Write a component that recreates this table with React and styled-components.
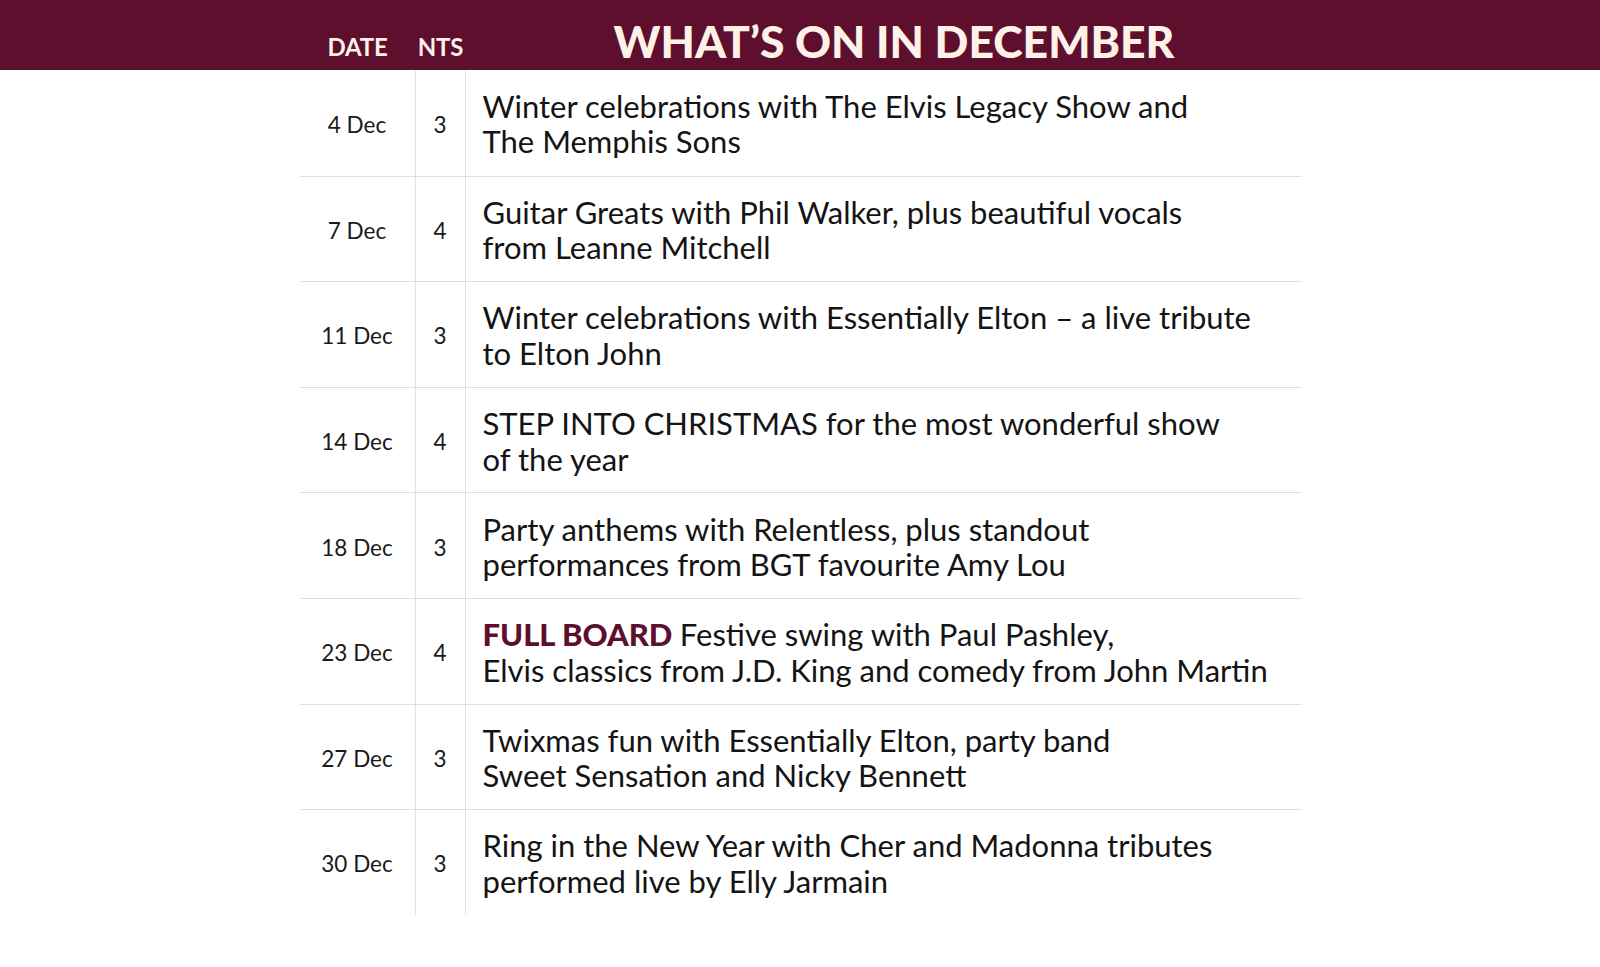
import styled, { createGlobalStyle } from "styled-components";

const GlobalStyle = createGlobalStyle`
  html, body {
    margin: 0;
    padding: 0;
    background: #ffffff;
  }
  body {
    font-family: Lato, "Open Sans", sans-serif;
    color: #161616;
  }
`;

const events = [
  { date: "4 Dec", nts: 3, lines: ["Winter celebrations with The Elvis Legacy Show and", "The Memphis Sons"] },
  { date: "7 Dec", nts: 4, lines: ["Guitar Greats with Phil Walker, plus beautiful vocals", "from Leanne Mitchell"] },
  { date: "11 Dec", nts: 3, lines: ["Winter celebrations with Essentially Elton – a live tribute", "to Elton John"] },
  { date: "14 Dec", nts: 4, lines: ["STEP INTO CHRISTMAS for the most wonderful show", "of the year"] },
  { date: "18 Dec", nts: 3, lines: ["Party anthems with Relentless, plus standout", "performances from BGT favourite Amy Lou"] },
  { date: "23 Dec", nts: 4, tag: "FULL BOARD", lines: ["Festive swing with Paul Pashley,", "Elvis classics from J.D. King and comedy from John Martin"] },
  { date: "27 Dec", nts: 3, lines: ["Twixmas fun with Essentially Elton, party band", "Sweet Sensation and Nicky Bennett"] },
  { date: "30 Dec", nts: 3, lines: ["Ring in the New Year with Cher and Madonna tributes", "performed live by Elly Jarmain"] },
];

const Page = styled.div`
  width: 1600px;
  min-height: 967px;
`;

const HeaderBar = styled.header`
  background: #5e0f2e;
  height: 70px;
`;

const Columns = styled.div`
  width: 1001px;
  margin: 0 auto;
  display: grid;
  grid-template-columns: 116px 50px 1fr;
  height: 100%;
`;

const ColLabel = styled.div`
  display: flex;
  align-items: flex-end;
  justify-content: center;
  padding-bottom: 9px;
  font-size: 24px;
  font-weight: 700;
  color: #fdf1e8;
  letter-spacing: -0.2px;
`;

const Title = styled.h1`
  margin: 0;
  display: flex;
  align-items: flex-end;
  justify-content: center;
  padding: 0 0 7px 22px;
  font-size: 44.5px;
  font-weight: 900;
  color: #fdf1e8;
  line-height: 1;
`;

const Table = styled.div`
  width: 1001px;
  margin: 0 auto;
`;

const Row = styled.div`
  display: grid;
  grid-template-columns: 116px 50px 1fr;
  height: 105.6px;
  padding-top: 3px;
  border-top: ${(p) => (p.first ? "none" : "1.5px solid #dedede")};
  box-sizing: border-box;
`;

const Cell = styled.div`
  display: flex;
  align-items: center;
  justify-content: center;
  font-size: 22.5px;
  color: #1a1a1a;
  border-right: 1.5px solid #e2e2e2;
  margin-top: -3px;
  padding-top: 3px;
`;

const Desc = styled.div`
  display: flex;
  flex-direction: column;
  justify-content: center;
  padding-left: 17px;
  font-size: 31px;
  line-height: 35.5px;
  color: #141414;
`;

const Tag = styled.span`
  font-weight: 900;
  color: #5e0f2e;
`;

export default function App() {
  return (
    <Page>
      <GlobalStyle />
      <HeaderBar>
        <Columns>
          <ColLabel>DATE</ColLabel>
          <ColLabel>NTS</ColLabel>
          <Title>WHAT’S ON IN DECEMBER</Title>
        </Columns>
      </HeaderBar>
      <Table>
        {events.map((e, i) => (
          <Row key={e.date} first={i === 0}>
            <Cell>{e.date}</Cell>
            <Cell>{e.nts}</Cell>
            <Desc>
              <div>
                {e.tag && <Tag>{e.tag} </Tag>}
                {e.lines[0]}
              </div>
              <div>{e.lines[1]}</div>
            </Desc>
          </Row>
        ))}
      </Table>
    </Page>
  );
}
